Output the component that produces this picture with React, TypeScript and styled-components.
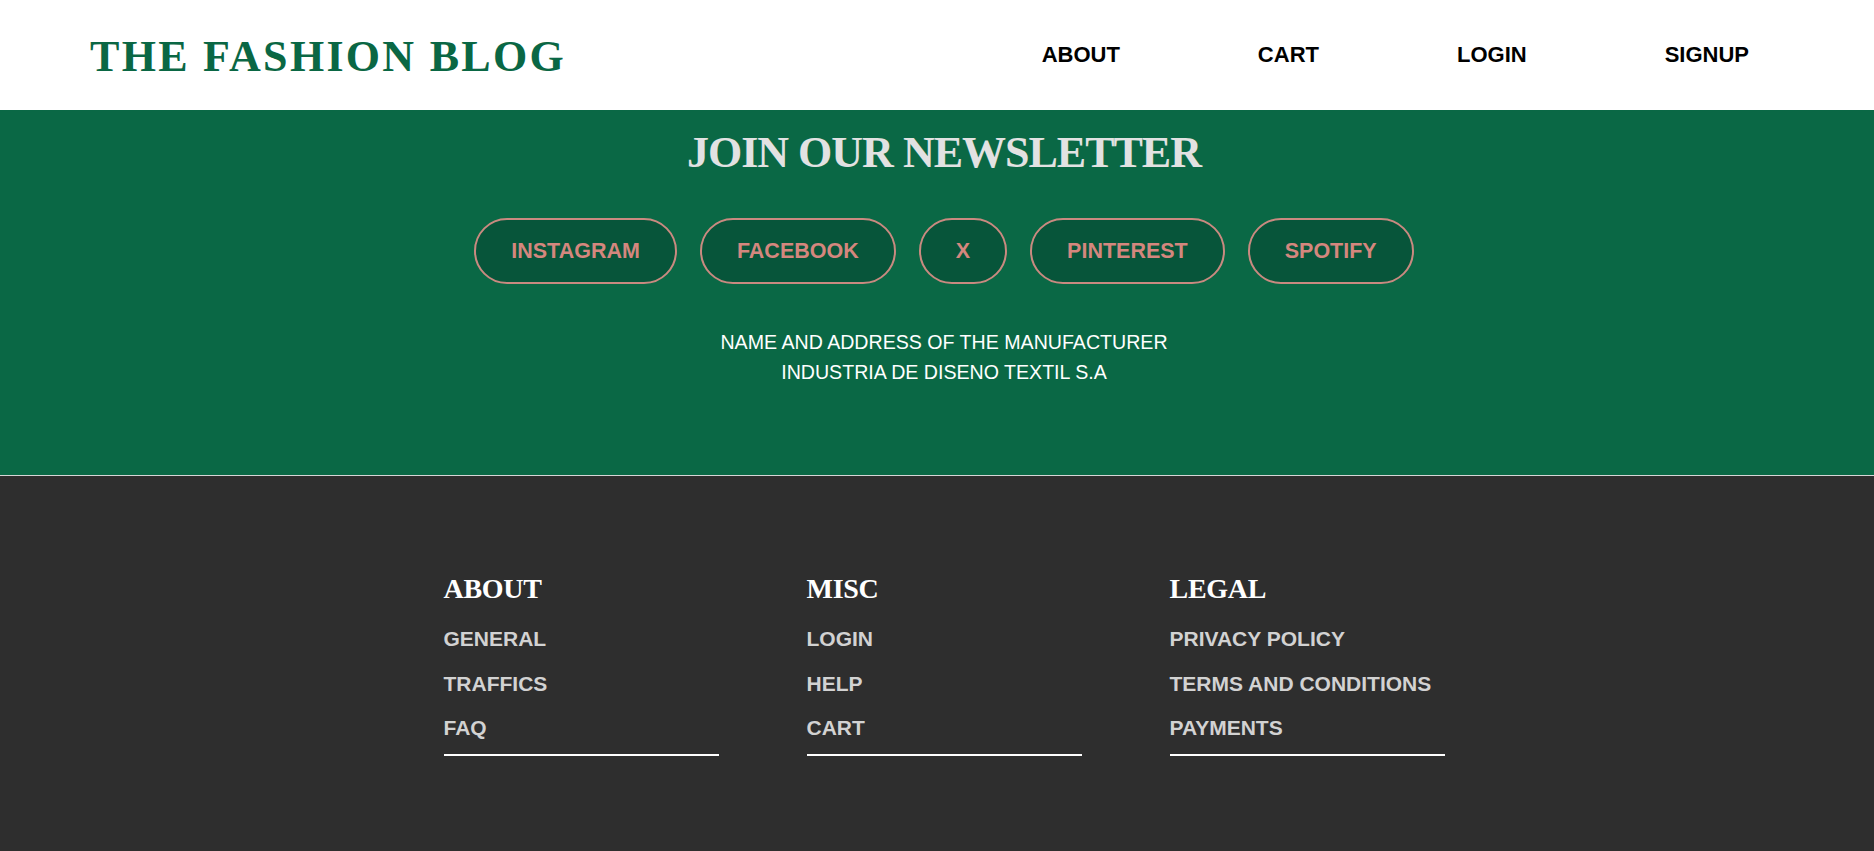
import React from "react";
import styled, { createGlobalStyle } from "styled-components";

const GlobalStyle = createGlobalStyle`
  body {
    margin: 0;
    background-color: #2e2e2e;
    font-family: "Liberation Sans", Arial, sans-serif;
  }
`;

const socials = ["INSTAGRAM", "FACEBOOK", "X", "PINTEREST", "SPOTIFY"];

const footerColumns = [
  { title: "ABOUT", links: ["GENERAL", "TRAFFICS", "FAQ"] },
  { title: "MISC", links: ["LOGIN", "HELP", "CART"] },
  { title: "LEGAL", links: ["PRIVACY POLICY", "TERMS AND CONDITIONS", "PAYMENTS"] },
];

const App = () => {
  return (
    <Page>
      <GlobalStyle />
      <Header>
        <Logo>THE FASHION BLOG</Logo>
        <Nav>
          <NavLink>ABOUT</NavLink>
          <NavLink>CART</NavLink>
          <NavLink>LOGIN</NavLink>
          <NavLink>SIGNUP</NavLink>
        </Nav>
      </Header>

      <Newsletter>
        <NewsletterTitle>JOIN OUR NEWSLETTER</NewsletterTitle>
        <SocialRow>
          {socials.map((name) => (
            <SocialButton key={name}>{name}</SocialButton>
          ))}
        </SocialRow>
        <Address>
          <div>NAME AND ADDRESS OF THE MANUFACTURER</div>
          <div>INDUSTRIA DE DISENO TEXTIL S.A</div>
        </Address>
      </Newsletter>

      <Footer>
        <FooterColumns>
          {footerColumns.map((col) => (
            <FooterColumn key={col.title}>
              <FooterHeading>{col.title}</FooterHeading>
              <FooterLinks>
                {col.links.map((link) => (
                  <FooterLink key={link}>{link}</FooterLink>
                ))}
              </FooterLinks>
            </FooterColumn>
          ))}
        </FooterColumns>
      </Footer>
    </Page>
  );
};

export default App;

const Page = styled.div`
  width: 100%;
  min-height: 100vh;
  background-color: #2e2e2e;
`;

const Header = styled.header`
  height: 110px;
  box-sizing: border-box;
  padding: 0 125px 0 90px;

  display: flex;
  justify-content: space-between;
  align-items: center;

  background-color: #ffffff;
`;

const Logo = styled.h1`
  margin: 0;
  padding-top: 4px;

  font-family: "Liberation Serif", "Times New Roman", serif;
  font-size: 44px;
  font-weight: 700;
  line-height: 44px;
  letter-spacing: 2.3px;
  color: #0a6744;
`;

const Nav = styled.nav`
  display: flex;
  gap: 138px;
`;

const NavLink = styled.a`
  font-size: 22px;
  font-weight: 700;
  line-height: 26px;
  color: #000000;
  cursor: pointer;
`;

const Newsletter = styled.section`
  padding: 21px 0 88px 14px;

  display: flex;
  flex-direction: column;
  align-items: center;

  background-color: #0a6845;
  border-bottom: 1px solid #d6d6d6;
`;

const NewsletterTitle = styled.h2`
  margin: 0;

  font-family: "Liberation Serif", "Times New Roman", serif;
  font-size: 44px;
  font-weight: 700;
  line-height: 44px;
  letter-spacing: -1px;
  color: #e2e2e2;
`;

const SocialRow = styled.div`
  margin-top: 43px;

  display: flex;
  gap: 23px;
`;

const SocialButton = styled.button`
  padding: 18px 35px;

  font-family: "Liberation Sans", Arial, sans-serif;
  font-size: 21.5px;
  font-weight: 700;
  line-height: 26px;
  color: #d4877e;

  background-color: #07553a;
  border: 2px solid #c98a80;
  border-radius: 999px;
  cursor: pointer;
`;

const Address = styled.div`
  margin-top: 43px;

  font-size: 19.6px;
  line-height: 30px;
  text-align: center;
  color: #ffffff;
`;

const Footer = styled.footer`
  padding: 97px 0 100px 14px;
  background-color: #2e2e2e;
`;

const FooterColumns = styled.div`
  display: flex;
  justify-content: center;
  gap: 88px;
`;

const FooterColumn = styled.div`
  width: 275px;
  padding-bottom: 14px;
  border-bottom: 2px solid #ffffff;
`;

const FooterHeading = styled.h3`
  margin: 0 0 22px;

  font-family: "Liberation Serif", "Times New Roman", serif;
  font-size: 28px;
  font-weight: 700;
  line-height: 32px;
  letter-spacing: -0.3px;
  color: #ffffff;
`;

const FooterLinks = styled.div`
  display: flex;
  flex-direction: column;
  gap: 20.5px;
`;

const FooterLink = styled.a`
  font-size: 21px;
  font-weight: 700;
  line-height: 24px;
  color: #d2d2d2;
  cursor: pointer;
`;
